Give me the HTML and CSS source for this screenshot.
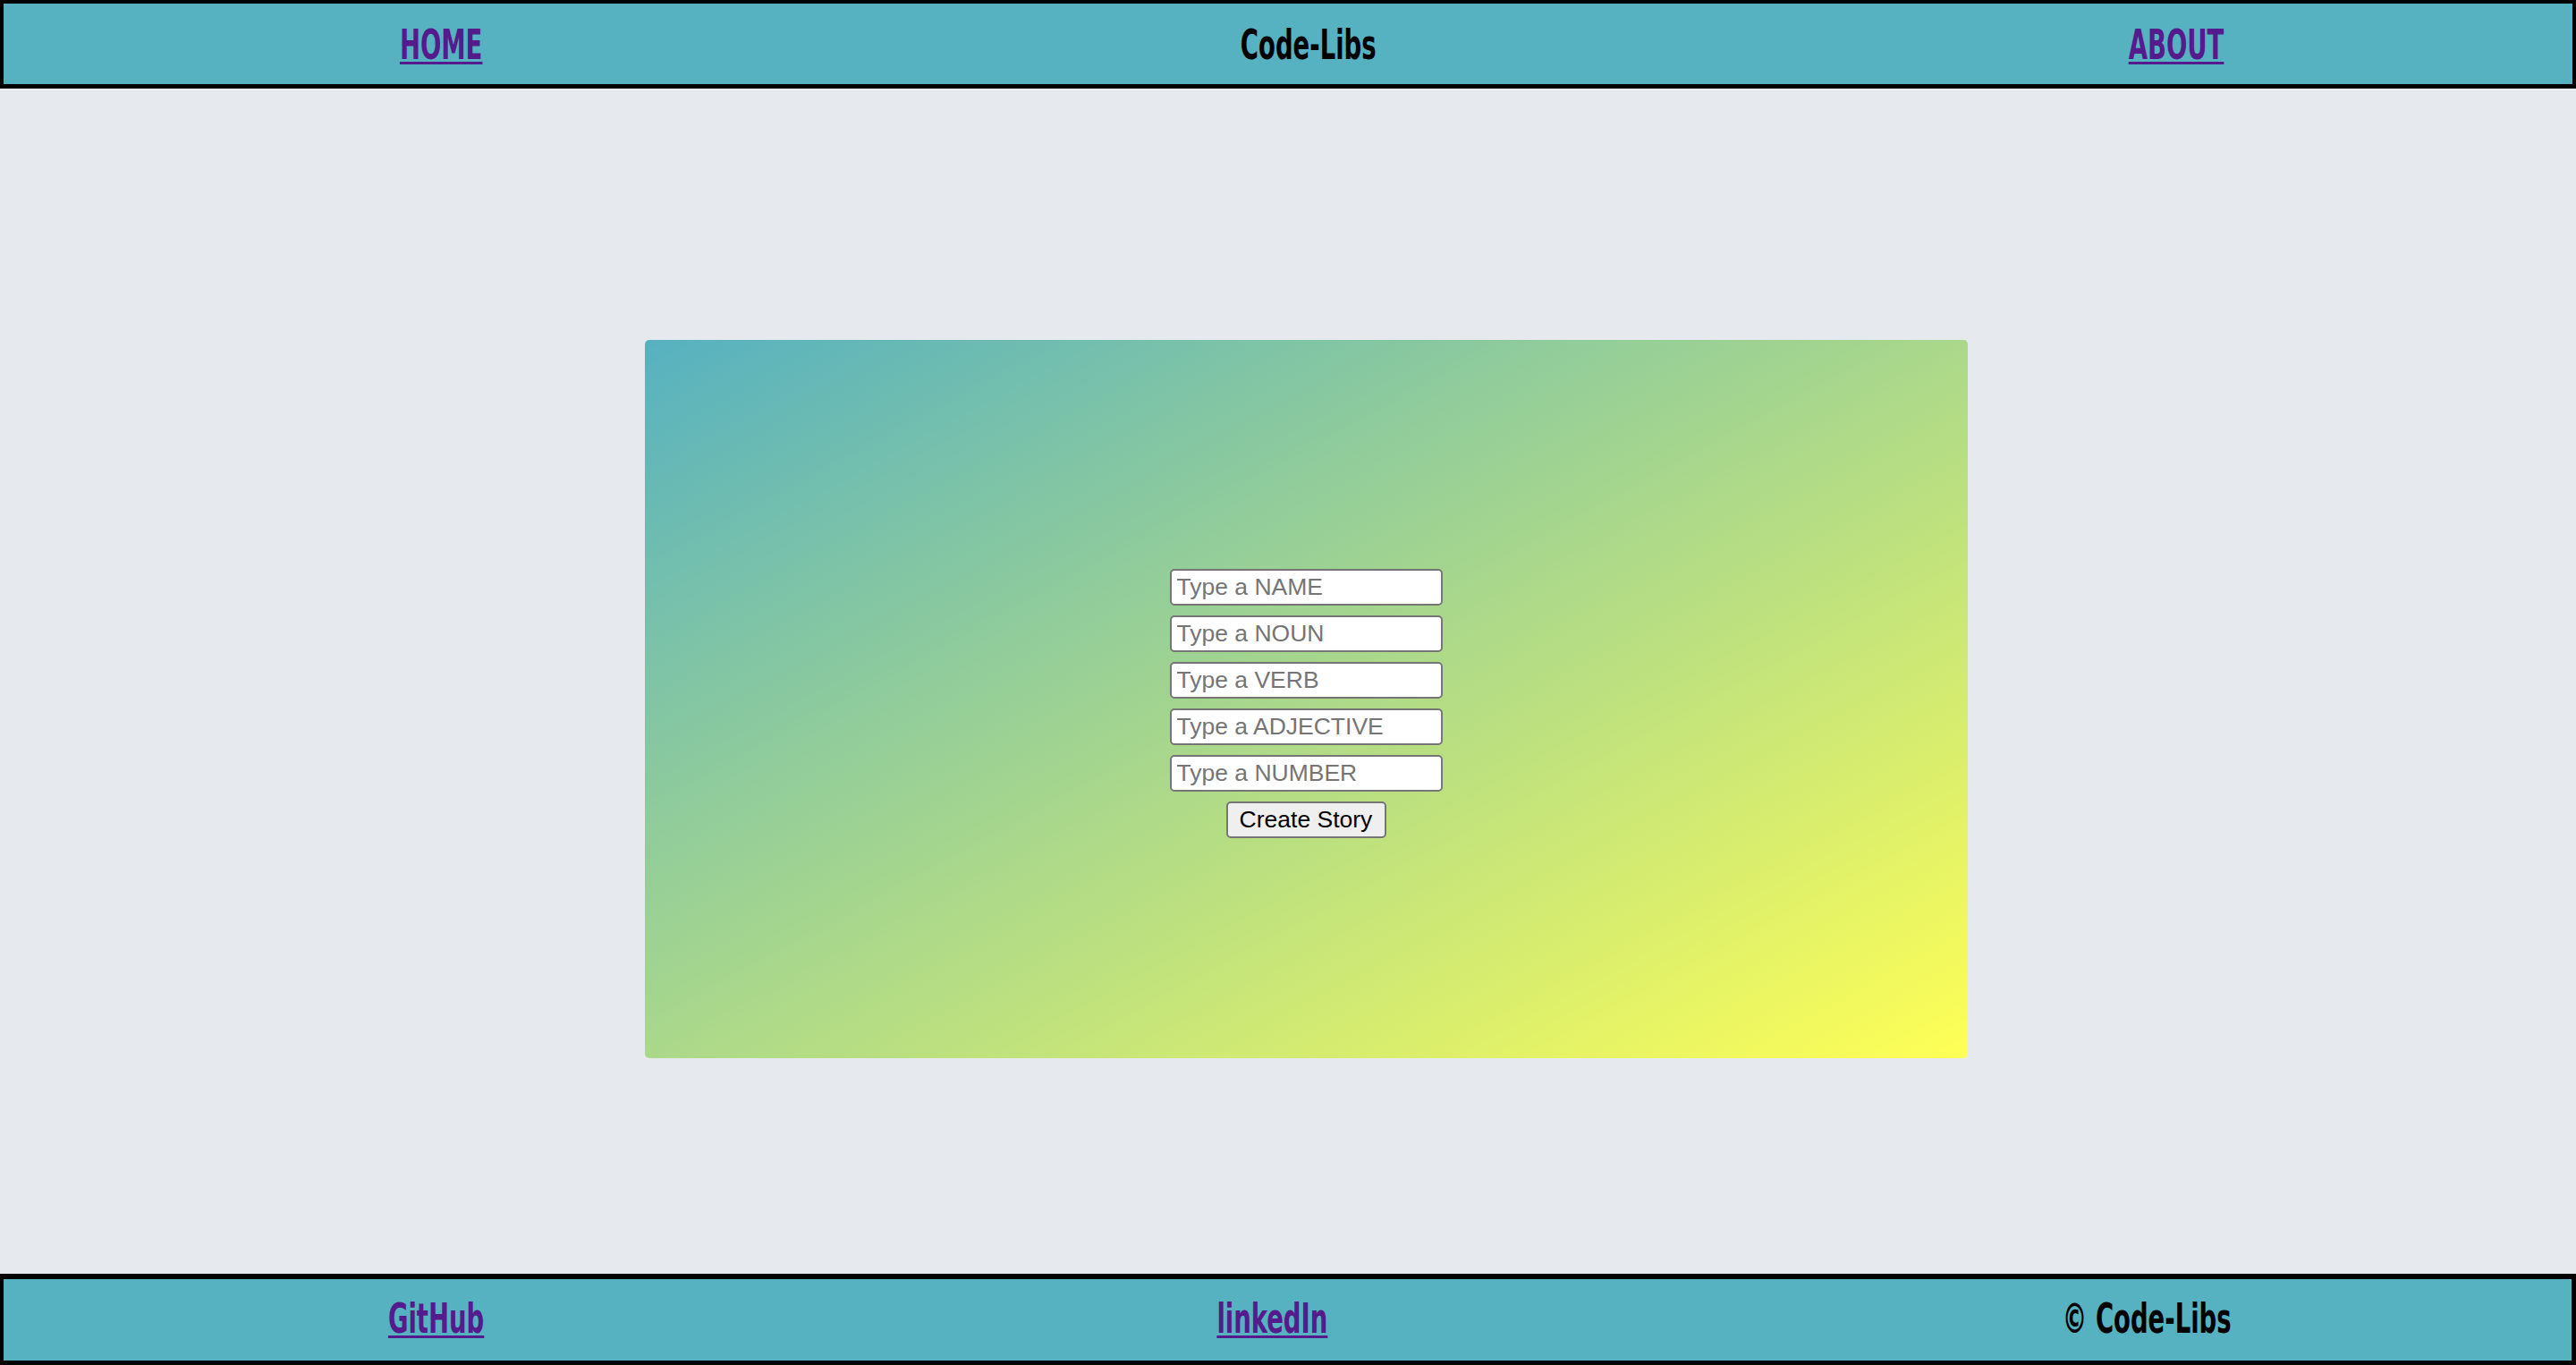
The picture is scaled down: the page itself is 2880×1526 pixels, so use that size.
FILE: index.html
```html
<!DOCTYPE html>
<html lang="en">
<head>
<meta charset="utf-8">
<title>Code-Libs</title>
<link rel="stylesheet" href="styles.css">
</head>
<body>
<header class="site-header">
  <nav class="nav">
    <a class="nav-link" href="#home"><span class="squeeze">HOME</span></a>
    <h1 class="brand"><span class="squeeze">Code-Libs</span></h1>
    <a class="nav-link" href="#about"><span class="squeeze">ABOUT</span></a>
  </nav>
</header>
<main class="main">
  <section class="card">
    <form class="story-form">
      <input class="field" type="text" placeholder="Type a NAME">
      <input class="field" type="text" placeholder="Type a NOUN">
      <input class="field" type="text" placeholder="Type a VERB">
      <input class="field" type="text" placeholder="Type a ADJECTIVE">
      <input class="field" type="text" placeholder="Type a NUMBER">
      <button class="create-btn" type="button">Create Story</button>
    </form>
  </section>
</main>
<footer class="site-footer">
  <div class="footer-row">
    <a class="nav-link" href="#github"><span class="squeeze">GitHub</span></a>
    <a class="nav-link" href="#linkedin"><span class="squeeze">linkedIn</span></a>
    <p class="copy"><span class="squeeze">© Code-Libs</span></p>
  </div>
</footer>
</body>
</html>
```
FILE: styles.css
```css
* { box-sizing: border-box; }

html, body {
  margin: 0;
  padding: 0;
}

body {
  height: 1526px;
  display: flex;
  flex-direction: column;
  background: #e6eaef;
  font-family: "Liberation Sans", Arial, sans-serif;
  overflow: hidden;
}

.site-header {
  height: 99px;
  flex: none;
  background: #56b1c0;
  border: 4px solid #000;
  border-bottom-width: 5px;
  overflow: hidden;
}

.nav {
  height: 100%;
  display: grid;
  grid-template-columns: 970px 970px 970px;
  align-items: center;
  justify-items: center;
  padding-left: 4px;
}

.nav-link,
.brand,
.copy {
  font-family: "DejaVu Sans Condensed", "Liberation Sans Narrow", "Liberation Sans", sans-serif;
  font-weight: bold;
  font-size: 47px;
  line-height: 1;
  margin: 0;
}

.nav-link {
  color: #551a8b;
  text-decoration: none;
}

.nav-link .squeeze {
  text-decoration: underline;
  text-decoration-thickness: 3px;
  text-underline-offset: 3px;
}

.brand,
.copy {
  color: #000;
}

.squeeze {
  display: inline-block;
  transform: scaleX(0.65);
}

.main {
  flex: 1;
  display: flex;
  align-items: center;
  justify-content: center;
  padding: 40px 0 0 40px;
}

.card {
  width: 1479px;
  height: 803px;
  border-radius: 5px;
  background: linear-gradient(to bottom right, #56b1c0, #ffff55);
  display: flex;
  align-items: center;
  justify-content: center;
  padding-top: 10px;
}

.story-form {
  display: flex;
  flex-direction: column;
  align-items: center;
  gap: 11px;
}

.field {
  width: 305px;
  height: 41px;
  margin: 0;
  padding: 2px 6px;
  border: 2px solid #767676;
  border-radius: 5px;
  background: #fff;
  font-family: "Liberation Sans", Arial, sans-serif;
  font-size: 26.5px;
  color: #000;
}

.field::placeholder {
  color: #757575;
}

.create-btn {
  width: 179px;
  height: 41px;
  margin: 0;
  padding: 0;
  border: 2px solid #767676;
  border-radius: 5px;
  background: #efefef;
  color: #000;
  font-family: "Liberation Sans", Arial, sans-serif;
  font-size: 26.5px;
}

.site-footer {
  height: 102px;
  flex: none;
  background: #56b1c0;
  border: 5px solid #000;
  border-top-width: 6px;
  border-left-width: 4px;
  overflow: hidden;
}

.footer-row {
  height: 100%;
  display: grid;
  grid-template-columns: 960px 908px 1048px;
  align-items: center;
  justify-items: center;
  padding-left: 4px;
  padding-bottom: 5px;
}
```
